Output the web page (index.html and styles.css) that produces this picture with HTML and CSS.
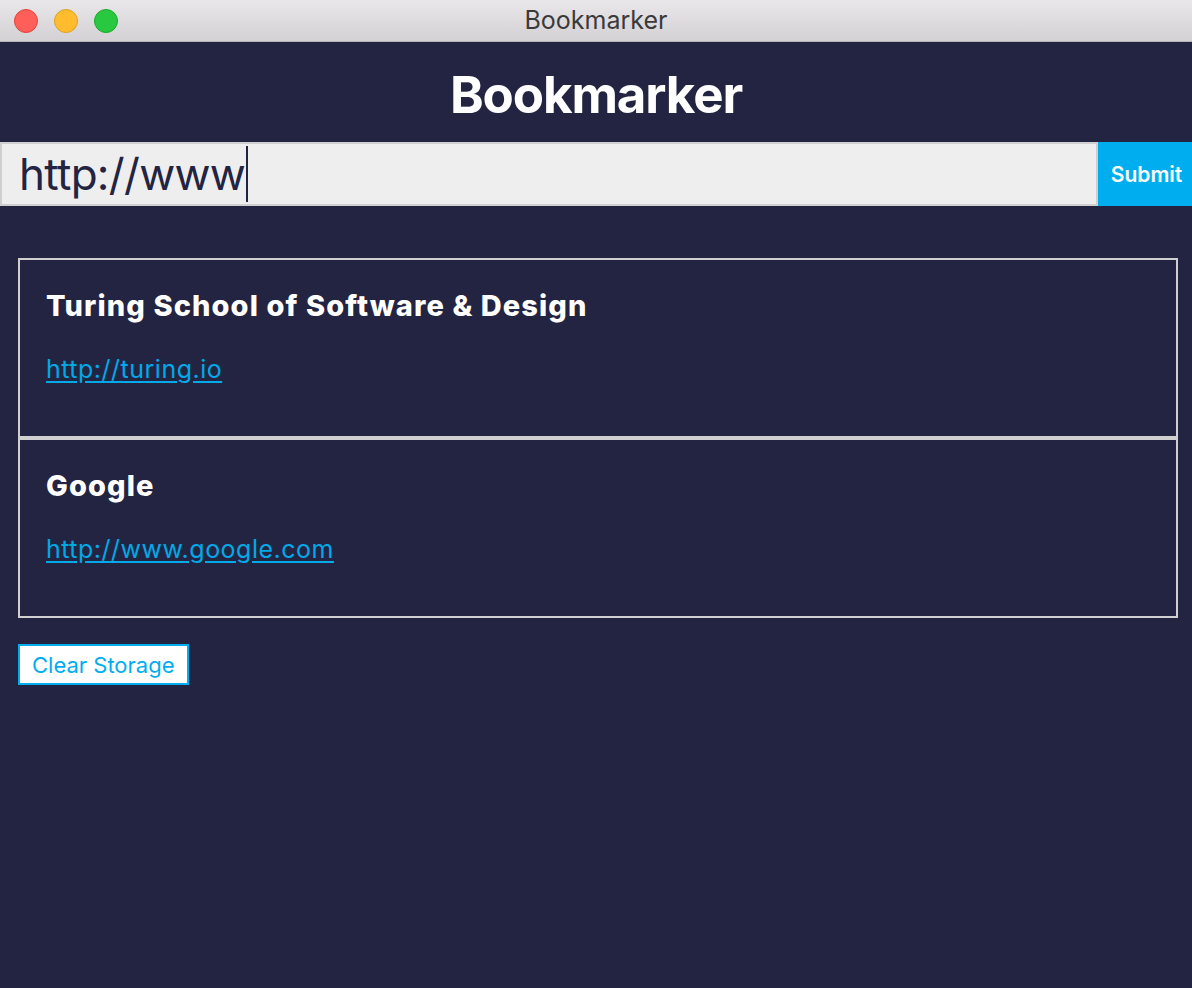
FILE: index.html
```html
<!DOCTYPE html>
<html lang="en">
<head>
<meta charset="utf-8">
<title>Bookmarker</title>
<link rel="stylesheet" href="styles.css">
</head>
<body>
<div class="titlebar">
  <div class="lights">
    <span class="light red"></span>
    <span class="light yellow"></span>
    <span class="light green"></span>
  </div>
  <div class="window-title">Bookmarker</div>
</div>
<main class="app">
  <header class="app-header">
    <h1 class="app-title">Bookmarker</h1>
  </header>
  <form class="url-form">
    <div class="url-input"><span class="url-text">http://www</span><span class="caret"></span></div>
    <button type="button" class="submit-btn">Submit</button>
  </form>
  <section class="bookmarks">
    <article class="card">
      <h2 class="card-title">Turing School of Software &amp; Design</h2>
      <a class="card-link" href="#">http://turing.io</a>
    </article>
    <article class="card">
      <h2 class="card-title">Google</h2>
      <a class="card-link" href="#">http://www.google.com</a>
    </article>
  </section>
  <div class="actions">
    <button type="button" class="clear-btn">Clear Storage</button>
  </div>
</main>
</body>
</html>
```

FILE: styles.css
```css
* { box-sizing: border-box; }
html, body { margin: 0; padding: 0; }
body {
  width: 1192px;
  height: 988px;
  overflow: hidden;
  font-family: Inter, "Helvetica Neue", Arial, sans-serif;
  background: #232442;
  display: flex;
  flex-direction: column;
}
.titlebar {
  height: 42px;
  flex: none;
  background: linear-gradient(#e9e7e9, #d3d1d3);
  border-bottom: 1px solid #b5b3b5;
  display: flex;
  align-items: center;
  position: relative;
}
.lights {
  display: flex;
  gap: 16px;
  padding-left: 14px;
  position: relative;
  z-index: 1;
}
.light {
  width: 24px;
  height: 24px;
  border-radius: 50%;
  display: block;
}
.red { background: #fe5f58; border: 1px solid #e0443e; }
.yellow { background: #ffbc2e; border: 1px solid #dea123; }
.green { background: #28c840; border: 1px solid #1aab29; }
.window-title {
  position: absolute;
  left: 0; right: 0; top: 0; bottom: 0;
  display: flex;
  align-items: center;
  justify-content: center;
  font-size: 25px;
  color: #3b3a3b;
  font-weight: 400;
  padding-bottom: 1px;
}
.app {
  flex: 1;
  display: flex;
  flex-direction: column;
}
.app-header {
  height: 100px;
  display: flex;
  align-items: center;
  justify-content: center;
}
.app-title {
  margin: 0;
  color: #fff;
  font-size: 51px;
  font-weight: 700;
  letter-spacing: -1.1px;
  padding-top: 4px;
}
.url-form {
  display: flex;
  height: 64px;
}
.url-input {
  flex: 1;
  background: #eeeeee;
  border: 2px solid #cfcfcf;
  display: flex;
  align-items: center;
  padding-left: 17px;
}
.url-text {
  font-size: 44px;
  color: #232442;
  letter-spacing: -0.7px;
}
.caret {
  width: 2px;
  height: 56px;
  background: #232442;
  margin-left: 1px;
}
.submit-btn {
  width: 94px;
  border: none;
  background: #00aeef;
  color: #fff;
  font-family: inherit;
  font-size: 21px;
  font-weight: 600;
  padding: 0 0 0 3px;
}
.bookmarks {
  margin: 52px 14px 0 18px;
  display: flex;
  flex-direction: column;
}
.card {
  height: 180px;
  border: 2px solid #d0d0d0;
  padding: 28px 26px 0;
}
.card-title {
  margin: 0;
  color: #fff;
  font-size: 29px;
  font-weight: 800;
  line-height: 36px;
  letter-spacing: 1.1px;
}
.card-link {
  display: inline-block;
  margin-top: 30px;
  color: #00a9e8;
  font-size: 25px;
  line-height: 30px;
  letter-spacing: 0.5px;
  text-decoration: underline;
  text-underline-offset: 3px;
}
.actions {
  margin: 26px 18px 0;
}
.clear-btn {
  height: 41px;
  padding: 0 12px;
  background: #fff;
  border: 2px solid #00aeef;
  color: #00aeef;
  font-family: inherit;
  font-size: 22px;
  font-weight: 400;
}
```
